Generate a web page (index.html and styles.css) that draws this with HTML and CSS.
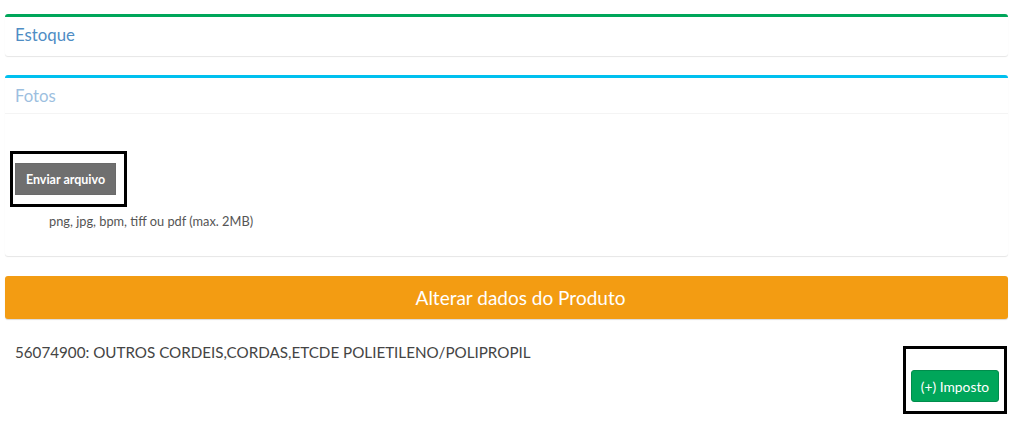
FILE: index.html
```html
<!DOCTYPE html>
<html lang="pt-BR">
<head>
<meta charset="utf-8">
<title>Produto</title>
<link rel="stylesheet" href="styles.css">
</head>
<body>
<div class="page">
  <section class="box box-success">
    <div class="box-header raised"><h3 class="box-title">Estoque</h3></div>
  </section>

  <section class="box box-info">
    <div class="box-header bordered"><h3 class="box-title faded">Fotos</h3></div>
    <div class="box-body upload">
      <div class="mark mark-upload">
        <button class="btn btn-gray" type="button">Enviar arquivo</button>
      </div>
      <p class="hint">png, jpg, bpm, tiff ou pdf (max. 2MB)</p>
    </div>
  </section>

  <button class="btn-block" type="button">Alterar dados do Produto</button>

  <div class="ncm">
    <p class="ncm-text">56074900: OUTROS CORDEIS,CORDAS,ETCDE POLIETILENO/POLIPROPIL</p>
    <div class="ncm-actions">
      <div class="mark mark-tax">
        <button class="btn btn-green" type="button">(+) Imposto</button>
      </div>
    </div>
  </div>
</div>
</body>
</html>
```

FILE: styles.css
```css
* { box-sizing: border-box; }
html, body {
  margin: 0;
  padding: 0;
  background: #ffffff;
  font-family: "Lato", "Open Sans", sans-serif;
  color: #444;
}
.page {
  width: 1003px;
  margin-left: 5px;
  padding-top: 14px;
}
.box {
  background: #fff;
  border-top: 3px solid #d2d6de;
  border-radius: 3px;
  box-shadow: 0 1px 1px rgba(0,0,0,0.1);
  margin-bottom: 19px;
}
.box-success { border-top-color: #00a65a; }
.box-info { border-top-color: #00c0ef; }
.box-header {
  height: 39px;
  padding: 0 10px;
  display: flex;
  align-items: center;
}
.box-header.raised { padding-bottom: 5px; }
.box-header.bordered {
  height: 36px;
  border-bottom: 1px solid #f4f4f4;
}
.box-title {
  margin: 0;
  font-size: 16.8px;
  font-weight: 400;
  color: #4f8dc4;
}
.box-title.faded { color: #9dbfdf; }
.upload {
  height: 142px;
  padding: 37px 0 0 5px;
}
.mark {
  display: inline-block;
  border: 3px solid #000;
}
.mark-upload {
  padding: 9px 8px 9px 2px;
}
.btn {
  display: block;
  border: 1px solid transparent;
  border-radius: 3px;
  font-family: inherit;
  font-size: 13.8px;
  color: #fff;
  height: 32px;
  padding: 0;
  cursor: pointer;
}
.btn-gray {
  width: 101px;
  background: #6f6f6f;
  border-color: #6a6a6a;
  border-radius: 0;
  font-weight: 700;
  font-size: 12.5px;
}
.btn-green {
  width: 88px;
  background: #00a65a;
  border-color: #008d4c;
}
.hint {
  margin: 6px 0 0 39px;
  font-size: 12.8px;
  color: #555;
}
.btn-block {
  display: block;
  width: 100%;
  height: 43px;
  margin-top: 20px;
  padding: 0 0 0 28px;
  border: 0;
  border-radius: 3px;
  background: #f39c12;
  color: #fff;
  font-family: inherit;
  font-size: 19px;
  box-shadow: 0 1px 1px rgba(0,0,0,0.15);
}
.ncm {
  padding: 23px 1px 0 10px;
}
.ncm-text {
  margin: 0;
  font-size: 15.2px;
  color: #444;
  line-height: 20px;
}
.ncm-actions {
  display: flex;
  justify-content: flex-end;
  margin-top: -16px;
}
.mark-tax {
  padding: 21px 5px 9px 5px;
}
```
